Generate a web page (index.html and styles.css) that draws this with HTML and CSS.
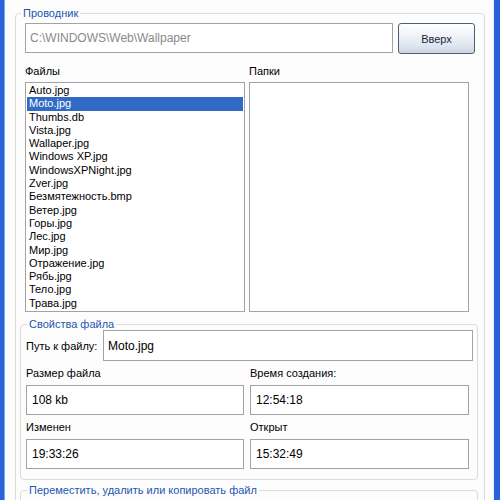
FILE: index.html
```html
<!DOCTYPE html>
<html lang="ru">
<head>
<meta charset="utf-8">
<title>Проводник</title>
<link rel="stylesheet" href="styles.css">
</head>
<body>
<div class="window">
  <fieldset class="group group-main">
    <legend class="caption caption-main">Проводник</legend>
    <div class="path-row">
      <div class="textbox path-box">C:\WINDOWS\Web\Wallpaper</div>
      <button class="btn-up" type="button">Вверх</button>
    </div>
    <div class="lists">
      <div class="list-col">
        <div class="label">Файлы</div>
        <ul class="listbox">
          <li>Auto.jpg</li>
          <li class="selected">Moto.jpg</li>
          <li>Thumbs.db</li>
          <li>Vista.jpg</li>
          <li>Wallaper.jpg</li>
          <li>Windows XP.jpg</li>
          <li>WindowsXPNight.jpg</li>
          <li>Zver.jpg</li>
          <li>Безмятежность.bmp</li>
          <li>Ветер.jpg</li>
          <li>Горы.jpg</li>
          <li>Лес.jpg</li>
          <li>Мир.jpg</li>
          <li>Отражение.jpg</li>
          <li>Рябь.jpg</li>
          <li>Тело.jpg</li>
          <li>Трава.jpg</li>
        </ul>
      </div>
      <div class="list-col">
        <div class="label">Папки</div>
        <ul class="listbox"></ul>
      </div>
    </div>

    <fieldset class="group group-sub">
      <legend class="caption caption-sub">Свойства файла</legend>
      <div class="props">
        <div class="path-line">
          <span class="path-label">Путь к файлу:</span>
          <div class="textbox value-box file-path">Moto.jpg</div>
        </div>
        <div class="props-grid">
          <div class="prop">
            <div class="prop-label">Размер файла</div>
            <div class="textbox value-box">108 kb</div>
          </div>
          <div class="prop">
            <div class="prop-label">Время создания:</div>
            <div class="textbox value-box">12:54:18</div>
          </div>
          <div class="prop">
            <div class="prop-label">Изменен</div>
            <div class="textbox value-box">19:33:26</div>
          </div>
          <div class="prop">
            <div class="prop-label">Открыт</div>
            <div class="textbox value-box">15:32:49</div>
          </div>
        </div>
      </div>
    </fieldset>

    <fieldset class="group group-sub group-last">
      <legend class="caption caption-sub">Переместить, удалить или копировать файл</legend>
      <div class="spacer"></div>
    </fieldset>
  </fieldset>
</div>
</body>
</html>
```
FILE: styles.css
```css
html, body {
  margin: 0;
  padding: 0;
  width: 500px;
  height: 500px;
  overflow: hidden;
  background: #ffffff;
}

.window {
  box-sizing: border-box;
  width: 500px;
  height: 500px;
  overflow: hidden;
  background: #fdfdfe;
  border-left: 4px solid #2b62db;
  border-right: 6px solid #2b62db;
  box-shadow: inset 1px 0 0 #7ea3ee, inset -1px 0 0 #e8eefc, inset -2px 0 0 #ffffff;
  font-family: "Liberation Sans", Arial, sans-serif;
  font-size: 11px;
  color: #000;
}

.group {
  margin: 0;
  padding: 0;
  min-width: 0;
  border: 1px solid #dcdcd6;
  border-radius: 4px;
}

.group-main {
  margin: 7px 9px 0 11px;
  height: 520px;
  box-sizing: border-box;
}

.caption {
  color: #1f55b0;
  font-size: 11px;
  padding: 0 2px;
}

.caption-main {
  line-height: 13px;
  margin-left: 5px;
}

.caption-sub {
  line-height: 12px;
  margin-left: 6px;
}

.path-row {
  display: flex;
  gap: 5px;
  margin: 3px 9px 0 9px;
  align-items: flex-start;
}

.textbox {
  box-sizing: border-box;
  border: 1px solid #a3a3a3;
  background: #fff;
  display: flex;
  align-items: center;
  white-space: nowrap;
  overflow: hidden;
}

.path-box {
  flex: 1;
  height: 30px;
  padding-left: 4px;
  font-size: 12px;
  color: #8a8a8a;
}

.btn-up {
  width: 77px;
  height: 31px;
  margin: 0;
  padding: 0;
  border: 1px solid #4d5d74;
  border-radius: 3px;
  background: linear-gradient(#ffffff 0%, #f1f4f9 35%, #dfe6f0 75%, #c9d3e2 100%);
  font-family: "Liberation Sans", Arial, sans-serif;
  font-size: 11px;
  color: #1b2740;
}

.lists {
  display: grid;
  grid-template-columns: 220px 220px;
  column-gap: 4px;
  margin: 11px 0 0 9px;
}

.list-col {
  display: flex;
  flex-direction: column;
}

.label {
  line-height: 13px;
  margin-bottom: 4px;
}

.listbox {
  box-sizing: border-box;
  height: 230px;
  margin: 0;
  padding: 1px;
  list-style: none;
  border: 1px solid #a3a3a3;
  background: #fff;
  overflow: hidden;
}

.listbox li {
  line-height: 13.3px;
  height: 13.3px;
  padding-left: 2px;
  white-space: nowrap;
}

.listbox li.selected {
  background: #316ac5;
  color: #fff;
}

.group-sub {
  margin: 6px 6px 0 4px;
}

.props {
  padding: 0 4px 10px 5px;
}

.path-line {
  display: flex;
  align-items: center;
}

.path-label {
  width: 77px;
  flex: none;
}

.value-box {
  height: 30px;
  padding-left: 5px;
  font-size: 12px;
}

.file-path {
  flex: 1;
  height: 31px;
  padding-left: 4px;
}

.props-grid {
  display: grid;
  grid-template-columns: 218px 219px;
  column-gap: 6px;
}

.prop-label {
  line-height: 13px;
  margin: 6px 0 5px;
}

.group-last {
  margin-top: 4px;
}

.spacer {
  height: 30px;
}
```
